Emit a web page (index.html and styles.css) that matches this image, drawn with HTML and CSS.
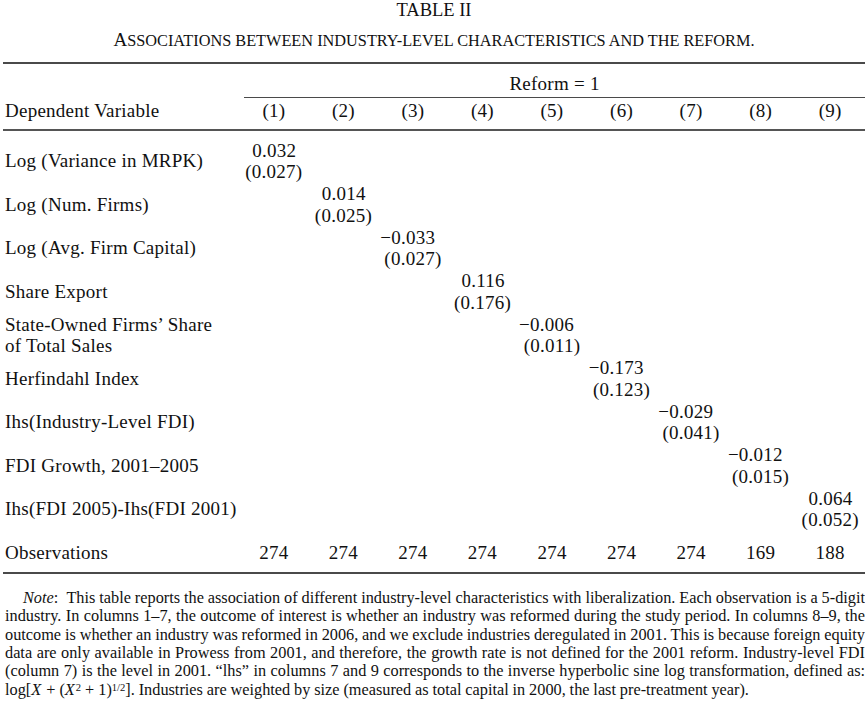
FILE: index.html
```html
<!DOCTYPE html>
<html lang="en">

<head>
  <meta charset="UTF-8">
  <meta name="viewport" content="width=device-width, initial-scale=1.0">
  <title>Table II</title>
  <link rel="stylesheet" href="styles.css">
</head>

<body>
  <div class="page">
    <h1 class="table-no">TABLE II</h1>
    <h2 class="table-title">A<span class="sc">ssociations between industry-level characteristics and the reform.</span></h2>

    <table class="results">
      <colgroup>
        <col class="col-label">
        <col span="9" class="col-num">
      </colgroup>
      <thead>
        <tr class="group-row">
          <th></th>
          <th colspan="9"><div class="group">Reform = 1</div></th>
        </tr>
        <tr class="head-row">
          <th class="label">Dependent Variable</th>
          <th>(1)</th>
          <th>(2)</th>
          <th>(3)</th>
          <th>(4)</th>
          <th>(5)</th>
          <th>(6)</th>
          <th>(7)</th>
          <th>(8)</th>
          <th>(9)</th>
        </tr>
      </thead>
      <tbody>
        <tr class="first">
          <td class="label">Log (Variance in MRPK)</td>
          <td><span class="est"><span class="b">0.032</span><span class="se">(0.027)</span></span></td>
          <td></td><td></td><td></td><td></td><td></td><td></td><td></td><td></td>
        </tr>
        <tr>
          <td class="label">Log (Num. Firms)</td>
          <td></td>
          <td><span class="est"><span class="b">0.014</span><span class="se">(0.025)</span></span></td>
          <td></td><td></td><td></td><td></td><td></td><td></td><td></td>
        </tr>
        <tr>
          <td class="label">Log (Avg. Firm Capital)</td>
          <td></td><td></td>
          <td><span class="est"><span class="b"><span class="neg">&minus;</span>0.033</span><span class="se">(0.027)</span></span></td>
          <td></td><td></td><td></td><td></td><td></td><td></td>
        </tr>
        <tr>
          <td class="label">Share Export</td>
          <td></td><td></td><td></td>
          <td><span class="est"><span class="b">0.116</span><span class="se">(0.176)</span></span></td>
          <td></td><td></td><td></td><td></td><td></td>
        </tr>
        <tr>
          <td class="label">State-Owned Firms&rsquo; Share<br>of Total Sales</td>
          <td></td><td></td><td></td><td></td>
          <td><span class="est"><span class="b"><span class="neg">&minus;</span>0.006</span><span class="se">(0.011)</span></span></td>
          <td></td><td></td><td></td><td></td>
        </tr>
        <tr>
          <td class="label">Herfindahl Index</td>
          <td></td><td></td><td></td><td></td><td></td>
          <td><span class="est"><span class="b"><span class="neg">&minus;</span>0.173</span><span class="se">(0.123)</span></span></td>
          <td></td><td></td><td></td>
        </tr>
        <tr>
          <td class="label">Ihs(Industry-Level FDI)</td>
          <td></td><td></td><td></td><td></td><td></td><td></td>
          <td><span class="est"><span class="b"><span class="neg">&minus;</span>0.029</span><span class="se">(0.041)</span></span></td>
          <td></td><td></td>
        </tr>
        <tr>
          <td class="label">FDI Growth, 2001&ndash;2005</td>
          <td></td><td></td><td></td><td></td><td></td><td></td><td></td>
          <td><span class="est"><span class="b"><span class="neg">&minus;</span>0.012</span><span class="se">(0.015)</span></span></td>
          <td></td>
        </tr>
        <tr>
          <td class="label">Ihs(FDI 2005)-Ihs(FDI 2001)</td>
          <td></td><td></td><td></td><td></td><td></td><td></td><td></td><td></td>
          <td><span class="est"><span class="b">0.064</span><span class="se">(0.052)</span></span></td>
        </tr>
        <tr class="obs-row">
          <td class="label">Observations</td>
          <td>274</td>
          <td>274</td>
          <td>274</td>
          <td>274</td>
          <td>274</td>
          <td>274</td>
          <td>274</td>
          <td>169</td>
          <td>188</td>
        </tr>
      </tbody>
    </table>

    <p class="note">
      <span class="ln first-ln"><em>Note</em>:&ensp;This table reports the association of different industry-level characteristics with liberalization. Each observation is a 5-digit</span>
      <span class="ln">industry. In columns 1&ndash;7, the outcome of interest is whether an industry was reformed during the study period. In columns 8&ndash;9, the</span>
      <span class="ln">outcome is whether an industry was reformed in 2006, and we exclude industries deregulated in 2001. This is because foreign equity</span>
      <span class="ln">data are only available in Prowess from 2001, and therefore, the growth rate is not defined for the 2001 reform. Industry-level FDI</span>
      <span class="ln">(column 7) is the level in 2001. &ldquo;lhs&rdquo; in columns 7 and 9 corresponds to the inverse hyperbolic sine log transformation, defined as:</span>
      <span class="ln last-ln">log[<i class="mv">X</i><span class="op">+</span>(<i class="mv">X</i><sup>2</sup><span class="op">+</span>1)<sup>1/2</sup>]. Industries are weighted by size (measured as total capital in 2000, the last pre-treatment year).</span>
    </p>
  </div>
</body>
</html>
```

FILE: styles.css
```css
body {
  margin: 0;
  background: #fff;
  color: #111;
  font-family: "Liberation Serif", "Times New Roman", serif;
}

.page {
  padding: 0 0 0 3px;
}

.table-no {
  margin: 0;
  font-size: 18.5px;
  font-weight: normal;
  line-height: 20px;
  text-align: center;
}

.table-title {
  margin: 10px 0 0;
  font-size: 19px;
  font-weight: normal;
  line-height: 20px;
  text-align: center;
}

.table-title .sc {
  font-size: 16.3px;
  text-transform: uppercase;
}

/* results table */
.results {
  width: 862px;
  margin-top: 11px;
  border-collapse: collapse;
  table-layout: fixed;
  font-size: 19px;
  letter-spacing: 0.25px;
  line-height: 21.75px;
  border-top: 2px solid #4a4a4a;
}

.col-label {
  width: 236px;
}

.col-num {
  width: 69.5px;
}

.results th,
.results td {
  padding: 0;
  font-weight: normal;
  text-align: center;
  vertical-align: middle;
}

.results .label {
  padding-left: 2px;
  text-align: left;
}

.group-row th {
  padding-top: 9px;
}

.group {
  margin-left: 5px;
  padding-bottom: 2px;
  border-bottom: 1.5px solid #4a4a4a;
}

.head-row {
  border-bottom: 2px solid #555;
}

.head-row th {
  padding: 2px 0 7px;
}

.results tr.first td {
  padding-top: 9px;
}

.est {
  display: inline-block;
  text-align: right;
}

.est .b,
.est .se {
  display: block;
}

.est .b {
  padding-right: 0.333em;
}

.neg {
  margin-left: -0.564em;
}

.obs-row {
  border-bottom: 2px solid #4a4a4a;
}

.obs-row td {
  padding: 11px 0 8px;
}

/* note under the table */
.note {
  margin: 15px 0 0;
  padding-left: 2px;
  font-size: 16.3px;
  line-height: 18.4px;
  word-spacing: -0.9px;
}

.note .ln {
  display: block;
  white-space: nowrap;
  text-align: justify;
  text-align-last: justify;
}

.note .first-ln {
  padding-left: 18px;
}

.note .last-ln {
  text-align-last: left;
  word-spacing: -0.2px;
}

.note .mv {
  padding-right: 1px;
}

.note .op {
  margin: 0 4px;
}

.note sup {
  font-size: 0.65em;
  line-height: 0;
  vertical-align: 4px;
}
```
